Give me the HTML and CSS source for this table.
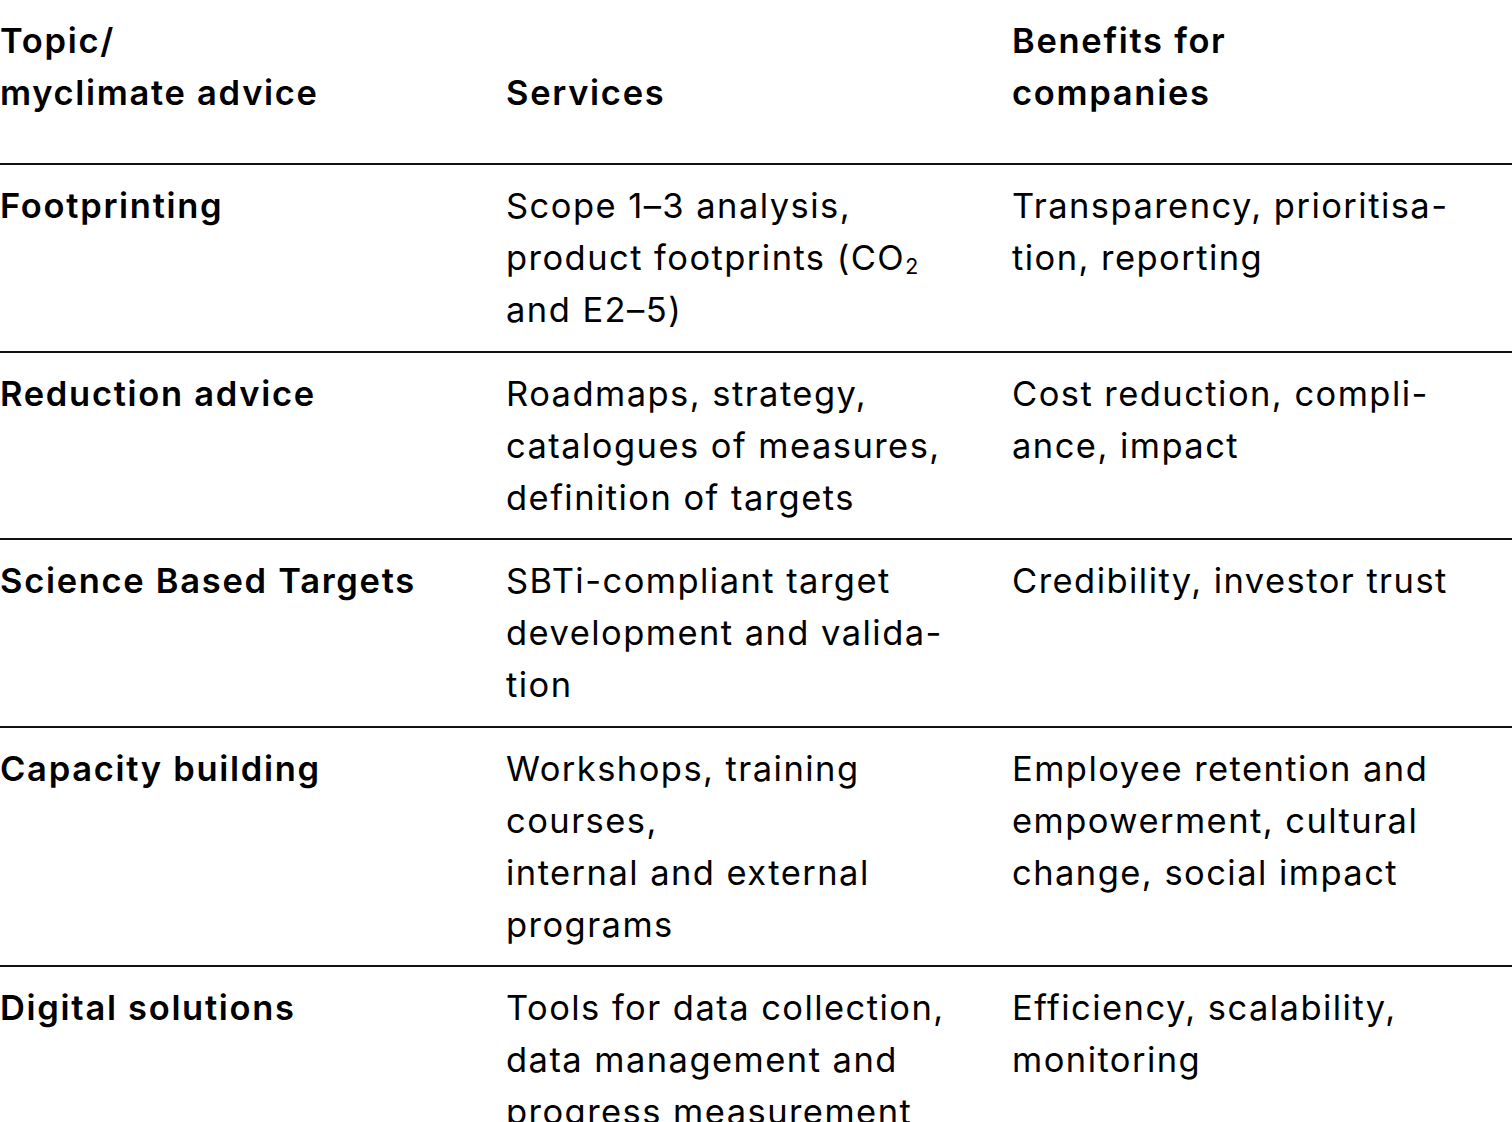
FILE: index.html
```html
<!DOCTYPE html>
<html lang="en">
<head>
<meta charset="utf-8">
<title>myclimate advice</title>
<link rel="stylesheet" href="styles.css">
</head>
<body>
<div class="table">
  <div class="row head">
    <div class="cell">Topic/<br>myclimate advice</div>
    <div class="cell">Services</div>
    <div class="cell">Benefits for<br>companies</div>
  </div>
  <div class="row">
    <div class="cell topic">Footprinting</div>
    <div class="cell">Scope 1–3 analysis,<br>product footprints (CO<sub>2</sub><br>and E2–5)</div>
    <div class="cell">Transparency, prioritisa-<br>tion, reporting</div>
  </div>
  <div class="row">
    <div class="cell topic">Reduction advice</div>
    <div class="cell">Roadmaps, strategy,<br>catalogues of measures,<br>definition of targets</div>
    <div class="cell">Cost reduction, compli-<br>ance, impact</div>
  </div>
  <div class="row">
    <div class="cell topic">Science Based Targets</div>
    <div class="cell">SBTi-compliant target<br>development and valida-<br>tion</div>
    <div class="cell">Credibility, investor trust</div>
  </div>
  <div class="row">
    <div class="cell topic">Capacity building</div>
    <div class="cell">Workshops, training<br>courses,<br>internal and external<br>programs</div>
    <div class="cell">Employee retention and<br>empowerment, cultural<br>change, social impact</div>
  </div>
  <div class="row">
    <div class="cell topic">Digital solutions</div>
    <div class="cell">Tools for data collection,<br>data management and<br>progress measurement</div>
    <div class="cell">Efficiency, scalability,<br>monitoring</div>
  </div>
</div>
</body>
</html>
```
FILE: styles.css
```css
html, body {
  margin: 0;
  padding: 0;
  background: #fff;
}
body {
  font-family: Inter, "Liberation Sans", sans-serif;
  font-size: 34.5px;
  line-height: 52px;
  letter-spacing: 1.45px;
  color: #000;
  overflow: hidden;
}
.table {
  display: flex;
  flex-direction: column;
}
.row {
  display: grid;
  grid-template-columns: 506px 506px 1fr;
  padding: 15px 0 14.6px;
  border-bottom: 2px solid #111;
}
.row.head {
  padding: 15px 0 44px;
  font-weight: 600;
  letter-spacing: 1.7px;
  align-items: end;
}
.cell {
  white-space: nowrap;
}
.topic {
  font-weight: 600;
  letter-spacing: 1.7px;
}
sub {
  font-size: 0.62em;
  line-height: 0;
  letter-spacing: 0;
  vertical-align: -0.2em;
}
```
